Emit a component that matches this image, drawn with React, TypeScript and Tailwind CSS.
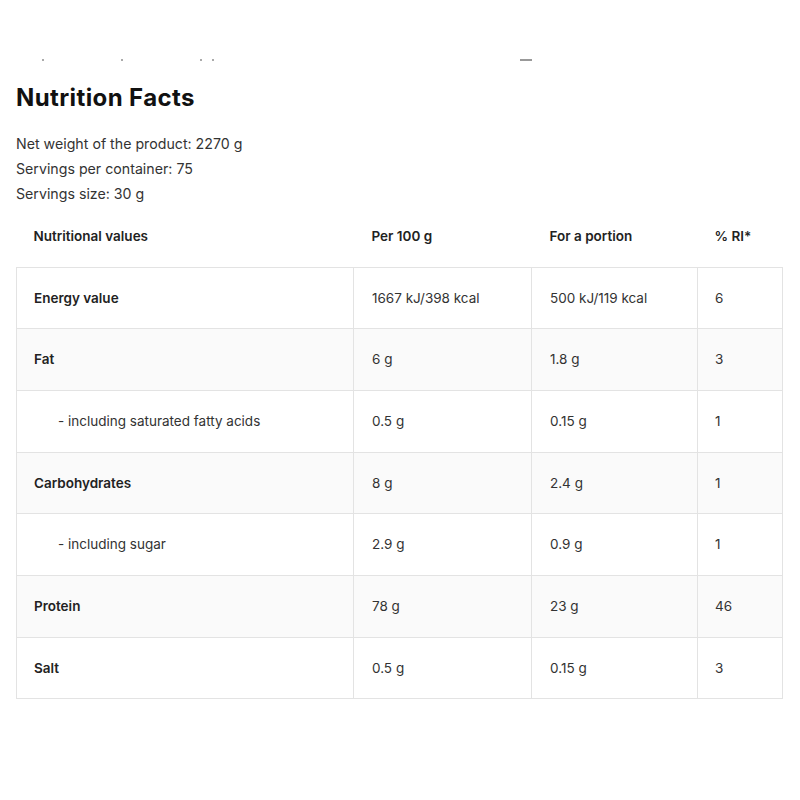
import React from 'react';

type Row = { label: string; per100: string; portion: string; ri: string; sub?: boolean };

const rows: Row[] = [
  { label: 'Energy value', per100: '1667 kJ/398 kcal', portion: '500 kJ/119 kcal', ri: '6' },
  { label: 'Fat', per100: '6 g', portion: '1.8 g', ri: '3' },
  { label: '- including saturated fatty acids', per100: '0.5 g', portion: '0.15 g', ri: '1', sub: true },
  { label: 'Carbohydrates', per100: '8 g', portion: '2.4 g', ri: '1' },
  { label: '- including sugar', per100: '2.9 g', portion: '0.9 g', ri: '1', sub: true },
  { label: 'Protein', per100: '78 g', portion: '23 g', ri: '46' },
  { label: 'Salt', per100: '0.5 g', portion: '0.15 g', ri: '3' },
];

const App: React.FC = () => {
  return (
    <div className="w-[800px] h-[800px] bg-white font-['Inter',sans-serif] text-[#2b2b2b] pl-4 pr-[18px]">
      {/* cut-off line from the section above */}
      <div className="h-[62px] flex items-end pb-[1px]">
        <span className="ml-[26px] w-[2px] h-[2px] bg-[#aaa]" />
        <span className="ml-[77px] w-[2px] h-[2px] bg-[#aaa]" />
        <span className="ml-[77px] w-[2px] h-[2px] bg-[#aaa]" />
        <span className="ml-[10px] w-[2px] h-[2px] bg-[#aaa]" />
        <span className="ml-[306px] w-[12px] h-[2px] bg-[#999]" />
      </div>

      <h2 className="mt-[21px] text-[24px] leading-[30px] font-bold text-[#111] tracking-[0.4px]">Nutrition Facts</h2>

      <div className="mt-[18px] text-[14.2px] leading-[25px] text-[#333]">
        <p>Net weight of the product: 2270 g</p>
        <p>Servings per container: 75</p>
        <p>Servings size: 30 g</p>
      </div>

      <table className="-mt-[1px] w-[766px] border-collapse table-fixed text-[13.5px]">
        <colgroup>
          <col className="w-[337px]" />
          <col className="w-[178px]" />
          <col className="w-[166px]" />
          <col className="w-[85px]" />
        </colgroup>
        <thead>
          <tr className="h-[62px] text-left text-[#222]">
            <th className="pl-[17px] font-semibold">Nutritional values</th>
            <th className="pl-[18px] font-semibold">Per 100 g</th>
            <th className="pl-[18px] font-semibold">For a portion</th>
            <th className="pl-[17px] font-semibold">% RI*</th>
          </tr>
        </thead>
        <tbody>
          {rows.map((r, i) => (
            <tr key={r.label} className={`h-[61.7px] ${i % 2 === 1 ? 'bg-[#fafafa]' : 'bg-white'}`}>
              <td
                className={`border border-[#e3e3e3] ${
                  r.sub ? 'pl-[41px] font-normal text-[#333]' : 'pl-[17px] font-semibold text-[#222]'
                }`}
              >
                {r.label}
              </td>
              <td className="border border-[#e3e3e3] pl-[18px] text-[#333]">{r.per100}</td>
              <td className="border border-[#e3e3e3] pl-[18px] text-[#333]">{r.portion}</td>
              <td className="border border-[#e3e3e3] pl-[17px] text-[#333]">{r.ri}</td>
            </tr>
          ))}
        </tbody>
      </table>
    </div>
  );
};

export default App;
